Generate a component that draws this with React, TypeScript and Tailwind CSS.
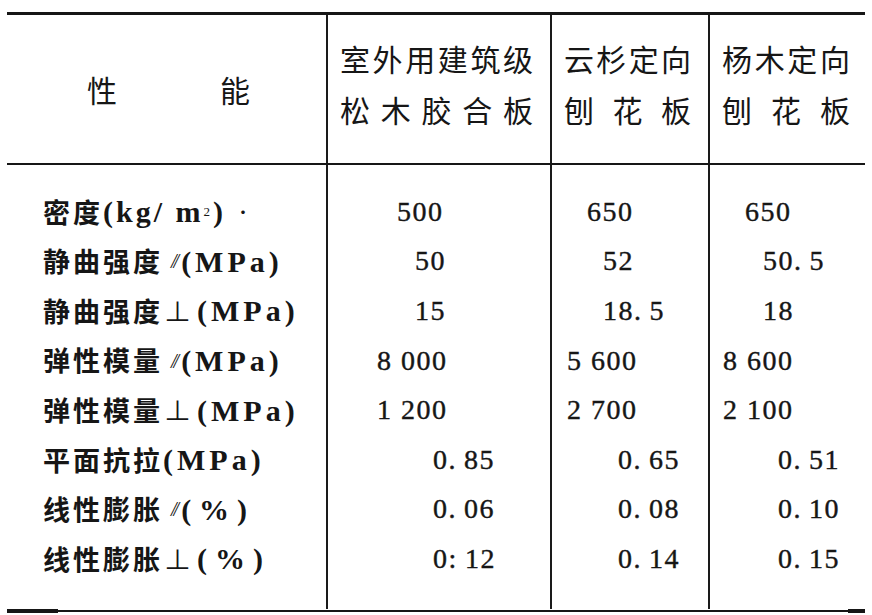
const cjk = '"Noto Sans CJK SC", "Noto Sans CJK JP", sans-serif';

type Cell = { v: string; pad: string };
type Row = { label: React.ReactNode; cells: Cell[] };

const Par = () => (
  <span className="ml-[8px] mr-[5px] font-['Liberation_Serif',serif] text-[20px] font-normal italic tracking-[-3px]">//</span>
);
const Perp = () => <span className="ml-[1px] mr-[3px] font-normal">⊥</span>;
const Unit = ({ t, wide }: { t: string; wide?: boolean }) => (
  <span
    className={`font-['Liberation_Serif',serif] text-[30px] font-bold ${wide ? 'tracking-[8px]' : 'tracking-[4px]'}`}
  >
    {t}
  </span>
);

const rows: Row[] = [
  {
    label: (
      <>
        密度
        <span className="font-['Liberation_Serif',serif] text-[30px] font-bold tracking-[3px]">
          (kg/ m<sup className="text-[13px] font-normal">2</sup>)
        </span>
        <span className="ml-[10px] text-[14px]">·</span>
      </>
    ),
    cells: [
      { v: '500', pad: 'pl-[69px]' },
      { v: '650', pad: 'pl-[35px]' },
      { v: '650', pad: 'pl-[35px]' },
    ],
  },
  {
    label: <>静曲强度<Par /><Unit t="(MPa)" /></>,
    cells: [
      { v: '50', pad: 'pl-[87px]' },
      { v: '52', pad: 'pl-[51px]' },
      { v: '50.\u20095', pad: 'pl-[53px]' },
    ],
  },
  {
    label: <>静曲强度<Perp /><Unit t="(MPa)" /></>,
    cells: [
      { v: '15', pad: 'pl-[87px]' },
      { v: '18.\u20095', pad: 'pl-[51px]' },
      { v: '18', pad: 'pl-[53px]' },
    ],
  },
  {
    label: <>弹性模量<Par /><Unit t="(MPa)" /></>,
    cells: [
      { v: '8 000', pad: 'pl-[49px]' },
      { v: '5 600', pad: 'pl-[15px]' },
      { v: '8 600', pad: 'pl-[13px]' },
    ],
  },
  {
    label: <>弹性模量<Perp /><Unit t="(MPa)" /></>,
    cells: [
      { v: '1 200', pad: 'pl-[49px]' },
      { v: '2 700', pad: 'pl-[15px]' },
      { v: '2 100', pad: 'pl-[13px]' },
    ],
  },
  {
    label: <>平面抗拉<Unit t="(MPa)" /></>,
    cells: [
      { v: '0.\u200985', pad: 'pl-[105px]' },
      { v: '0.\u200965', pad: 'pl-[66px]' },
      { v: '0.\u200951', pad: 'pl-[68px]' },
    ],
  },
  {
    label: <>线性膨胀<Par /><Unit t="(%)" wide /></>,
    cells: [
      { v: '0.\u200906', pad: 'pl-[105px]' },
      { v: '0.\u200908', pad: 'pl-[66px]' },
      { v: '0.\u200910', pad: 'pl-[68px]' },
    ],
  },
  {
    label: <>线性膨胀<Perp /><Unit t="(%)" wide /></>,
    cells: [
      { v: '0:\u200912', pad: 'pl-[105px]' },
      { v: '0.\u200914', pad: 'pl-[66px]' },
      { v: '0.\u200915', pad: 'pl-[68px]' },
    ],
  },
];

const Spread = ({ text, w }: { text: string; w: string }) => (
  <div className={`flex justify-between ${w}`}>
    {text.split('').map((c, i) => (
      <span key={i}>{c}</span>
    ))}
  </div>
);

const HeadCell = ({ a, b, w }: { a: string; b: string; w: string }) => (
  <div className="flex flex-col justify-center border-l-2 border-[#1a1a1a] pb-[11px] pl-[12px] leading-[51px]">
    <Spread text={a} w={w} />
    <Spread text={b} w={w} />
  </div>
);

export default function App() {
  return (
    <div className="w-[872px] h-[615px] bg-white pl-[7px] pt-[12px] text-[#161616]" style={{ fontFamily: cjk }}>
      <div className="w-[858px]">
        <div className="h-[3px] bg-[#161616]" />

        <div className="grid h-[148px] grid-cols-[319px_224px_158px_157px] text-[30px]">
          <div className="flex items-center pl-[80px]">
            <span>性</span>
            <span className="ml-[103px]">能</span>
          </div>
          <HeadCell a="室外用建筑级" b="松木胶合板" w="w-[193px]" />
          <HeadCell a="云杉定向" b="刨花板" w="w-[127px]" />
          <HeadCell a="杨木定向" b="刨花板" w="w-[128px]" />
        </div>

        <div className="h-[2px] bg-[#161616]" />

        <div className="grid h-[444px] grid-cols-[319px_224px_158px_157px]">
          <div className="flex flex-col pl-[36px] pt-[22px] text-[27px] font-semibold tracking-[3px]">
            {rows.map((r, i) => (
              <div key={i} className="flex h-[49.6px] items-center whitespace-nowrap">
                {r.label}
              </div>
            ))}
          </div>
          {[0, 1, 2].map((c) => (
            <div
              key={c}
              className="flex flex-col border-l-2 border-[#1a1a1a] pt-[22px] font-['Liberation_Serif',serif] text-[28px] tracking-[1.5px] [-webkit-text-stroke:0.4px]"
            >
              {rows.map((r, i) => (
                <div key={i} className={`flex h-[49.6px] items-center whitespace-pre ${r.cells[c].pad}`}>
                  {r.cells[c].v}
                </div>
              ))}
            </div>
          ))}
        </div>

        <div className="flex items-center">
          <div className="h-[4px] w-[51px] bg-[#161616]" />
          <div className="h-[2px] flex-1 bg-[#161616]" />
          <div className="h-[4px] w-[17px] bg-[#161616]" />
        </div>
      </div>
    </div>
  );
}
